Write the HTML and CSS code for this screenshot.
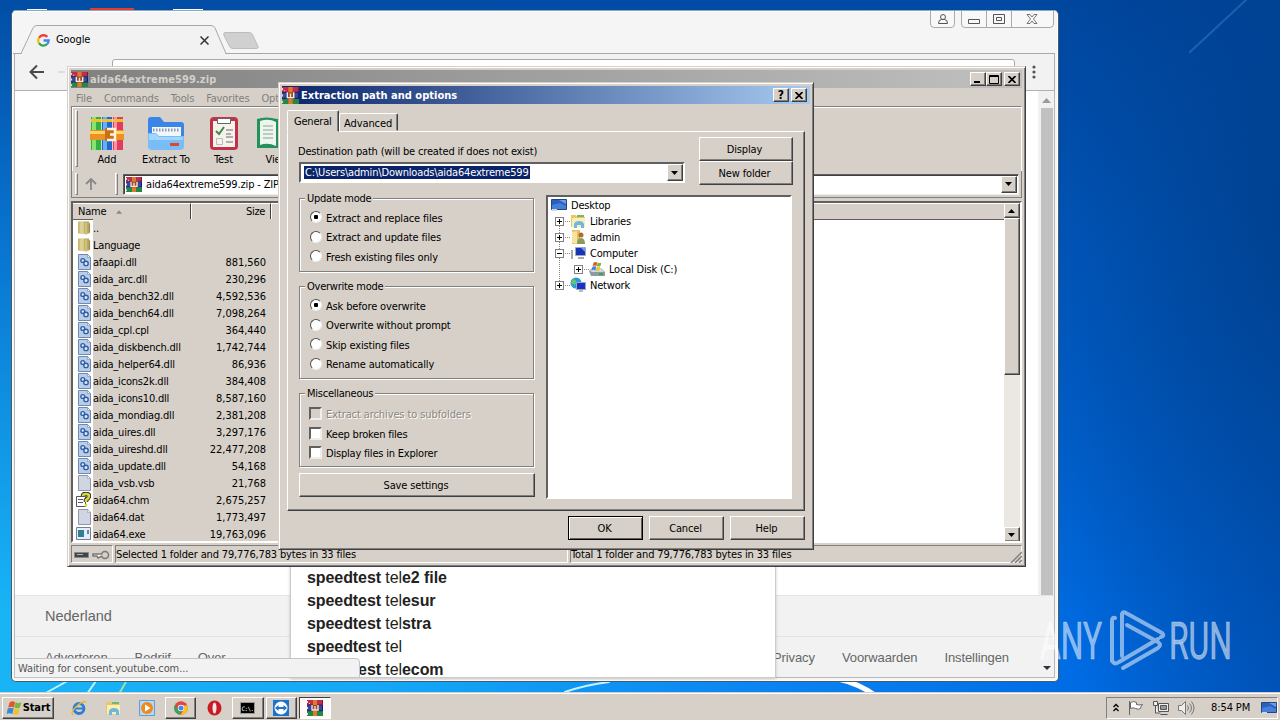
FILE: index.html
```html
<!DOCTYPE html>
<html lang="en">
<head>
<meta charset="utf-8">
<title>Desktop</title>
<link rel="stylesheet" href="styles.css">
</head>
<body>
<svg width="0" height="0" class="defs">
  <symbol id="rar" viewBox="0 0 16 16">
    <path fill="#c02c50" d="M0 0h16v5H0z"/><path fill="#3048b0" d="M0 5h16v6H0z"/><path fill="#1f8a48" d="M0 11h16v5H0z"/>
    <path stroke="#201030" stroke-width=".7" d="M0 5h16M0 10.700h16"/>
    <path fill="#e07a28" d="M6 0h4v16H6z"/><path fill="#9a4a2a" d="M5 5h7v6H5z"/><path fill="none" stroke="#f6e8dc" stroke-width="1.300" d="M5 5v5h6V5M8 6v4"/>
    <path fill="#f3d8c8" d="M0 1h1v2H0zM0 7h1v2H0zM0 13h1v2H0zM2 3h1v1H2z"/>
    <path fill="#801838" d="M15 0h1v5h-1z"/><path fill="#182068" d="M15 5h1v6h-1z"/>
  </symbol>
  <symbol id="dll" viewBox="0 0 13 16">
    <path fill="#b7cde8" stroke="#7287ae" d="M.5.5h9l3 3v12H.5z"/><path fill="#eef5fd" stroke="#7287ae" stroke-width=".6" d="M9.500.500v3h3z"/>
    <g fill="#dce9f8" stroke="#315ea6" stroke-width="1.400"><circle cx="4.800" cy="6.500" r="1.900"/><circle cx="8" cy="9.400" r="2.200"/></g>
  </symbol>
  <symbol id="file" viewBox="0 0 13 16">
    <path fill="#d0d5e4" stroke="#8f96aa" d="M.5.5h9l3 3v12H.5z"/><path fill="#fff" stroke="#8f96aa" stroke-width=".6" d="M9.500.500v3h3z"/>
  </symbol>
  <symbol id="fold" viewBox="0 0 14 16">
    <path fill="#c9b871" d="M0 1h5v13H0z"/><path fill="#ddd092" d="M2 2l4-1v14l-4-1z"/><path fill="#b5a35e" d="M6 1h6v13H6z"/><path fill="#cfc07a" d="M7 2h3v13H7z"/><path fill="#8d7c40" d="M12 3h1v10h-1z"/>
  </symbol>
  <symbol id="book" viewBox="0 0 16 16">
    <path fill="#e9c767" d="M1 2h5l1 2h8v10H1z"/><path fill="#fbeeb2" d="M2 5h13v9H2z"/><path fill="#6fb7dd" d="M4 15V11q1-3 5-3t5 3v4h-3v-3H7v3z"/><path fill="#79b66b" d="M7 2h7v2H7z"/>
  </symbol>
  <symbol id="scr" viewBox="0 0 16 14">
    <path fill="#2a5fc0" stroke="#25457f" d="M.5 1.500h15v10H.5z"/><path fill="#6a9fe4" d="M8 2h7v4z"/><path fill="#4580d8" d="M1 7l8-2 6 3v3H1z"/><path fill="#ced9e4" d="M1 11h5v2H1z"/>
  </symbol>
  <symbol id="flag" viewBox="0 0 14 14">
    <path fill="#e65524" d="M3 2c2-1 3-1 5 0L7 7C5 6 4 6 1.500 7z"/><path fill="#75b93c" d="M8.500 2.200c2 1 3 1 5.500 0L12.500 7c-2 1-3 1-5 .2z"/><path fill="#3989d8" d="M1.200 8c2-1 3-1 5.500-.2L5.500 13c-2-1-3.500-1-5.500 0z"/><path fill="#f5c026" d="M7.300 8c2 1 3 1 5 .2L11 13c-2 1-3 1-5 .200z"/>
  </symbol>
  <symbol id="dn" viewBox="0 0 8 4"><path d="M0 0h7L3.500 4z"/></symbol>
  <symbol id="up" viewBox="0 0 8 4"><path d="M0 4h7L3.500 0z"/></symbol>
  <symbol id="x" viewBox="0 0 8 7"><path fill="none" stroke="#000" stroke-width="1.700" d="M.5 0l7 7M7.500 0l-7 7"/></symbol>
</svg>

<main class="desktop">
  <svg class="wall" viewBox="0 0 1280 720">
    <g fill="none" stroke-linecap="round">
      <path stroke="#6fb6ef" stroke-opacity=".25" stroke-width="2" d="M1190 52L1246 0"/>
      <path stroke="#c8f2ff" stroke-width="2" d="M44 694l27-15M87 694l11-16M565 692q20-7 44-10"/>
      <path stroke="#9ae0a0" stroke-width="2" d="M119 694l8-14"/>
      <path stroke="#fff" stroke-width="5" d="M838 679q20 4 40 18"/>
    </g>
    <path fill="#e63b2c" d="M90 8h44v4H90z"/><path fill="#fff" d="M173 9h30v3h-30zM27 9h20v2H27z"/>
  </svg>

  <section class="chrome">
    <header class="strip">
      <svg class="tabshape" width="260" height="29" viewBox="0 0 260 29">
        <path fill="#f2f2f2" stroke="#a8a8a8" d="M0 28.500h8L20 3q1-2.500 4-2.500h174q3 0 4 2.500l11 25.500"/><path fill="#f2f2f2" d="M9 28h203v1H9z"/>
        <path fill="#d0d0d0" stroke="#bcbcbc" d="M212 7.500h24q3 0 4 3l5 11q1 2-2 2h-23q-3 0-4-3l-5-10q-1-3 1-3z"/>
      </svg>
      <div class="tab">
        <svg width="13" height="13" viewBox="0 0 13 13" fill="none" stroke-width="2.300"><path stroke="#e94235" d="M2 3.800A5.200 5.200 0 0 1 10.300 2.900"/><path stroke="#fabb05" d="M2 9.200A5.200 5.200 0 0 1 2 3.800"/><path stroke="#34a853" d="M10 10.200A5.200 5.200 0 0 1 2 9.200"/><path stroke="#4285f4" d="M6.500 6.500h5.200Q11.600 8.800 10 10.200"/></svg>
        <span class="tabname">Google</span>
        <svg width="9" height="9" viewBox="0 0 9 9"><path stroke="#333" stroke-width="1.500" d="M.5.5l8 8M8.500.5l-8 8"/></svg>
      </div>
      <div class="wbtns">
        <svg width="124" height="18" viewBox="0 0 124 18" fill="#f8f8f8" stroke="#aaa">
          <path d="M.5 0v13q0 3.500 3.500 3.500h17q3.500 0 3.500-3.500V0M31.500 0v13q0 3.500 3.500 3.500h85q3.500 0 3.500-3.500V0M56.500 0v16M81.500 0v16"/>
          <g stroke="#555"><circle cx="13" cy="6" r="2.500"/><path d="M8.500 12.500q0-4 3-4h3q3 0 3 4zM38.500 8.500h11v4h-11zM63.500 3.500h11v9h-11zM66.500 6.500h5v3h-5z"/><path stroke-width=".8" d="M97 3.500h3l2 2.500 2-2.500h3l-3.500 4.500 3.500 4.500h-3l-2-2.500-2 2.500h-3l3.500-4.500z"/></g>
        </svg>
      </div>
    </header>
    <div class="tools">
      <svg width="36" height="16" viewBox="0 0 36 16" fill="none" stroke="#4a4a4a" stroke-width="2"><path d="M15 8H2M8 1.500L1.500 8 8 14.500"/><path stroke="#ddd" d="M29 8h7"/></svg>
      <div class="omni"></div>
      <svg width="4" height="14" fill="#555"><circle cx="2" cy="2" r="1.600"/><circle cx="2" cy="7" r="1.600"/><circle cx="2" cy="12" r="1.600"/></svg>
    </div>
    <div class="page">
      <div class="blank"><div class="sbar"><svg width="9" height="5" fill="#999"><path d="M0 5h9L4.500 0z"/></svg><i></i></div></div>
      <div class="country">Nederland</div>
      <div class="links"><span>Adverteren</span><span>Bedrijf</span><span>Over</span><span class="push">Privacy</span><span>Voorwaarden</span><span>Instellingen</span></div>
    </div>
    <div class="sugg">
      <p><b>speedtest</b> tel<b>e2 file</b></p><p><b>speedtest</b> tel<b>esur</b></p><p><b>speedtest</b> tel<b>stra</b></p><p><b>speedtest</b> tel</p><p><b>speedtest</b> tel<b>ecom</b></p>
    </div>
    <div class="wait">Waiting for consent.youtube.com...</div>
  </section>

  <svg class="mark" width="210" height="70" viewBox="0 0 210 70">
    <g fill="#fff" fill-opacity=".55" stroke="#fff" stroke-opacity=".3"><text x="4" y="51" textLength="62" lengthAdjust="spacingAndGlyphs">ANY</text><text x="133" y="51" textLength="63" lengthAdjust="spacingAndGlyphs">RUN</text></g>
    <g fill="none" stroke="#b9d4f2" stroke-opacity=".7" stroke-width="4" stroke-linejoin="round" stroke-linecap="round"><path d="M79 10q-3-1-3 3v40q3 4 7 1l39-23M91 17l31 17q4 3 0 6L87 60M86 48V6q1-3 4-1l36 20q3 3-1 4"/></g>
    <path fill="#2b3440" d="M7 58h8l-4 4z"/>
  </svg>

  <section class="rar">
    <header class="rtitle"><svg width="17" height="15" viewBox="0 0 16 16" preserveAspectRatio="none"><use href="#rar"/></svg><b>aida64extreme599.zip</b>
      <span class="cb first"><svg width="8" height="8"><path d="M0 6h6v2H0z"/></svg></span><span class="cb"><svg width="10" height="9" fill="none" stroke="#000"><path d="M.5.500h9v8h-9zM0 1.500h10"/></svg></span><span class="cb gap"><svg width="8" height="7"><use href="#x"/></svg></span>
    </header>
    <nav class="menu"><span>File</span><span>Commands</span><span>Tools</span><span>Favorites</span><span>Options</span></nav>
    <div class="rtools">
      <i class="grip"></i>
      <div class="tool w1"><svg width="34" height="34" viewBox="0 0 34 34"><path fill="#2fb344" d="M1 1h10v33H1z"/><path fill="#8ae36a" d="M2 1h4v33H2z"/><path fill="#2566cf" d="M12 1h10v33H12z"/><path fill="#68b0f5" d="M13 1h4v33h-4z"/><path fill="#e33c5a" d="M23 1h10v33H23z"/><path fill="#ff92a4" d="M24 1h3v33h-3z"/><path fill="#f0c030" d="M1 3h10v3H1zM12 3h10v3H12zM23 3h10v3H23z"/><path fill="#e79424" d="M0 14h34v10H0z"/><path fill="#ffd36a" d="M0 15h34v3H0z"/><path fill="#c87018" d="M15 12h11v13H15z"/><path fill="none" stroke="#fff3dc" stroke-width="2.500" d="M17 13h8v11h-8M20 18.500h5"/></svg>Add</div>
      <div class="tool w2"><svg width="38" height="34" viewBox="0 0 38 34"><path fill="#3a86e8" d="M1 4q0-3 3-3h9l4 5h17q3 0 3 3v22H1z"/><path fill="#f2f7fd" d="M5 11h29v10H5z"/><path stroke="#8e99aa" stroke-width="3" stroke-dasharray="1.500 1.500" d="M6 14h27"/><path fill="#78bdf8" d="M1 17h8l3 3h25v10q0 4-4 4H5q-4 0-4-4z"/><path fill="#a4d6fd" d="M2 18h7l3 3h24v3H2z"/><path fill="#e0462a" d="M23 27h9v3h-9z"/></svg>Extract To</div>
      <div class="tool w3"><svg width="28" height="34" viewBox="0 0 28 34"><rect y="1" width="28" height="33" rx="4" fill="#c03248"/><path fill="#f6f2ec" d="M3 5h22v26H3z"/><path fill="#fff" stroke="#666" d="M7.500 2.500h13v5h-13z"/><path fill="none" stroke="#3b8a48" stroke-width="2" d="M6 15l3 3 5-7"/><path stroke="#999" stroke-width="1.500" d="M16 14h7M16 21h7M16 26h7M16 18h5"/><path fill="none" stroke="#bbb" d="M6.500 22.500h6v6h-6z"/></svg>Test</div>
      <div class="tool w4"><svg width="40" height="34" viewBox="0 0 40 34"><path fill="#25915a" d="M0 3q9-3 20 0 11-3 20 0v29H0z"/><path fill="#eef5ed" d="M3 5q9-3 16 1v24q-8-4-16-1zM37 5q-9-3-16 1v24q8-4 16-1z"/><path stroke="#aac0b2" stroke-width="1.500" d="M6 10h10M6 14h10M6 18h10M6 22h10"/></svg>View</div>
    </div>
    <div class="addr"><i class="grip"></i><svg width="12" height="12" fill="none" stroke="#888" stroke-width="1.800"><path d="M6 12V1M1 6l5-5 5 5"/></svg><i class="grip g2"></i>
      <div class="field"><svg width="16" height="15" viewBox="0 0 16 16" preserveAspectRatio="none"><use href="#rar"/></svg><span>aida64extreme599.zip - ZIP archive</span><em class="arrow"><svg width="8" height="4"><use href="#dn"/></svg></em></div>
    </div>
    <div class="list">
      <div class="lhead"><span class="c1">Name<svg width="7" height="4" fill="#888"><use href="#up"/></svg></span><span class="c2">Size</span><span class="c3"></span></div>
      <div class="rows" id="rows"></div>
      <div class="vscroll"><em class="arrow"><svg width="8" height="4"><use href="#up"/></svg></em><i></i><em class="arrow end"><svg width="8" height="4"><use href="#dn"/></svg></em></div>
    </div>
    <footer class="status"><span class="s0"><svg width="37" height="10"><path fill="#444" stroke="#888" d="M.5 2.500h14v5H.5z"/><path stroke="#9bc" d="M3 4.500h6"/><g fill="none" stroke="#777" stroke-width="1.500"><circle cx="31" cy="5" r="3.500"/><path fill="#fff" d="M28 4h-9v2h4l1 2 4-2"/></g></svg></span><span class="s1">Selected 1 folder and 79,776,783 bytes in 33 files</span><span class="s2">Total 1 folder and 79,776,783 bytes in 33 files</span><svg class="size" width="12" height="12" stroke="#808080" stroke-width="1.500"><path d="M1 12L12 1M5 12l7-7M9 12l3-3"/></svg></footer>
  </section>

  <section class="dlg">
    <header class="dtitle"><svg width="17" height="17"><use href="#rar"/></svg><b>Extraction path and options</b><span class="cb first q">?</span><span class="cb gap"><svg width="8" height="7"><use href="#x"/></svg></span></header>
    <div class="tabs"><span class="on">General</span><span>Advanced</span></div>
    <div class="panel">
      <div class="dest">
        <div class="dl"><label>Destination path (will be created if does not exist)</label><div class="combo"><mark>C:\Users\admin\Downloads\aida64extreme599</mark><em class="arrow"><svg width="8" height="4"><use href="#dn"/></svg></em></div></div>
        <div class="db"><button>Display</button><button>New folder</button></div>
      </div>
      <div class="cols">
        <div class="left">
          <div class="grp g-a"><h4>Update mode</h4><p><i class="r on"></i>Extract and replace files</p><p><i class="r"></i>Extract and update files</p><p><i class="r"></i>Fresh existing files only</p></div>
          <div class="grp g-b"><h4>Overwrite mode</h4><p><i class="r on"></i>Ask before overwrite</p><p><i class="r"></i>Overwrite without prompt</p><p><i class="r"></i>Skip existing files</p><p><i class="r"></i>Rename automatically</p></div>
          <div class="grp g-c"><h4>Miscellaneous</h4><p class="off"><i class="k"></i>Extract archives to subfolders</p><p><i class="k"></i>Keep broken files</p><p><i class="k"></i>Display files in Explorer</p></div>
          <button class="save">Save settings</button>
        </div>
        <div class="tree">
          <p><svg width="16" height="14"><use href="#scr"/></svg>Desktop</p>
          <p class="n"><i class="plus"></i><svg width="16" height="16"><use href="#book"/></svg>Libraries</p>
          <p class="n"><i class="plus"></i><svg width="16" height="16"><path fill="#e5c061" d="M2 1h8v14H2z"/><path fill="#f6e3a0" d="M2 3l5-1v13l-5-1z"/><circle cx="11" cy="6" r="2.500" fill="#b06a3a"/><path fill="#8a9a5c" d="M7 15q0-6 4-6t4 6z"/></svg>admin</p>
          <p class="n long"><i></i><svg width="16" height="16"><path fill="#1832b8" stroke="#9ab" d="M5.500 2.500h10v8h-10z"/><path fill="#6c9af0" d="M11 3h4v4z"/><path fill="#aaa" d="M1 5h2v9H1zM8 12h6v2H8z"/></svg>Computer</p>
          <p class="n deep"><i class="plus"></i><svg width="16" height="16"><path fill="#8d9aa4" d="M0 10l3-3h9l4 4v4H2z"/><path fill="#cfd6dc" d="M1 10l3-3h8l3 4H3z"/><path fill="#3aa84a" d="M10 12h4v2h-4z"/><svg x="2" y="0" width="11" height="10" viewBox="0 0 14 14"><use href="#flag"/></svg></svg>Local Disk (C:)</p>
          <p class="n"><i class="plus"></i><svg width="16" height="16"><circle cx="6" cy="6" r="5.500" fill="#2c9bd2"/><path fill="#65c66a" d="M3 2q4 1 3 4t-5 0z"/><path fill="#1832c8" stroke="#9ab" d="M6.500 5.500h9v7h-9z"/><path fill="#bbb" d="M9 13h4v2H9z"/></svg>Network</p>
        </div>
      </div>
    </div>
    <div class="acts"><button class="def">OK</button><button>Cancel</button><button>Help</button></div>
  </section>

  <footer class="task">
    <button class="start"><svg width="16" height="15" viewBox="0 0 14 14"><use href="#flag"/></svg>Start</button>
    <span class="ti"><svg width="17" height="16"><ellipse cx="8" cy="8.500" rx="5" ry="5" fill="none" stroke="#2b7fd4" stroke-width="2.800"/><path stroke="#2b7fd4" stroke-width="2" d="M4 8.500h9"/><path fill="none" stroke="#e8b832" stroke-width="1.400" d="M2 15Q-1 12 6 6t9-4"/></svg></span>
    <span class="ti"><svg width="16" height="16"><use href="#book"/></svg></span>
    <span class="ti"><svg width="16" height="16"><path fill="#b7d9f5" stroke="#5b9ed8" d="M.5.5h15v15H.5z"/><circle cx="8" cy="8" r="6" fill="#ee8a1c"/><path fill="#fff" d="M6 4.500v7L11.500 8z"/></svg></span>
    <span class="ti btn"><svg width="14" height="14" viewBox="0 0 14 14"><circle cx="7" cy="7" r="6.800" fill="#e2453a"/><path fill="#35a653" d="M1 3.700L4.500 9.500 7 10 6 13.800A6.800 6.800 0 0 1 1 3.700z"/><path fill="#fbc21c" d="M13.300 4.500H8L10 8.500 6.500 13.800A6.800 6.800 0 0 0 13.300 4.500z"/><circle cx="7" cy="7" r="3.200" fill="#fff"/><circle cx="7" cy="7" r="2.500" fill="#4285f4"/></svg></span>
    <span class="ti"><svg width="15" height="16"><ellipse cx="7.500" cy="8" rx="7" ry="7.500" fill="#cc1a22"/><ellipse cx="7.500" cy="8" rx="2" ry="5.500" fill="#f3e8e8"/></svg></span>
    <span class="ti btn"><svg width="15" height="12"><path stroke="#999" d="M.5.500h14v11H.5z"/><text x="1.500" y="9" fill="#fff" font-size="6" letter-spacing="-.6" font-family="DejaVu Sans Mono">C:\.</text></svg></span>
    <span class="ti btn"><svg width="16" height="16"><path fill="#1b73d0" d="M0 0h16v16H0z"/><circle cx="8" cy="8" r="6.500" fill="#fff"/><path fill="#1b73d0" d="M2 8l3.500-3v2h5V5L14 8l-3.500 3V9h-5v2z"/></svg></span>
    <span class="ti btn act"><svg width="16" height="16"><use href="#rar"/></svg></span>
    <div class="tray">
      <svg width="6" height="9" fill="none" stroke="#000" stroke-width="1.300"><path d="M.5 4L3 1.500 5.500 4M.5 8L3 5.500 5.500 8"/></svg>
      <svg width="16" height="16" fill="#fff" stroke="#666"><path d="M1.500 1v14M2.500 2.500q3-2 6 0v2q3 1 6 0-2 2-2 4-2 1.500-5 0-2-1.500-5 0z"/></svg>
      <svg width="16" height="16" fill="#eee" stroke="#555"><path d="M5.500 3.500h10v8h-10zM7.500 14.500h7M2.500 6v7h5"/><path fill="#999" d="M7.500 5.500h6v4h-6z"/><path d="M.5 1.500h4v4h-4z"/></svg>
      <svg width="17" height="16" fill="#eee" stroke="#777"><path d="M.5 5.500h3l4-4v13l-4-4h-3z"/><path fill="none" d="M9.500 5.500q2 2.500 0 5M11.500 3.500q4 4.500 0 9M13.500 1.500q5 6.500 0 13"/></svg>
      <span>8:54 PM</span>
      <svg width="16" height="14"><use href="#scr"/></svg>
    </div>
  </footer>
</main>
<script src="files.js"></script>
</body>
</html>
```

FILE: styles.css
```css
* { box-sizing: border-box; }
body { margin: 0; font: 11px/13px "DejaVu Sans Condensed", "DejaVu Sans", sans-serif; font-stretch: condensed; letter-spacing: -.35px; color: #000; }
p, h4 { margin: 0; font-weight: normal; }
svg { display: block; flex: none; }
i, em { font-style: normal; flex: none; }
.defs { position: absolute; }
.desktop { position: relative; width: 1280px; height: 720px; overflow: hidden;
  background:
    radial-gradient(ellipse 380px 560px at 102% 32%, #003c84cc 0, #003c8400 100%),
    linear-gradient(180deg, #0046a0ee 0, #0056bea8 35%, #0070e000 85%),
    linear-gradient(90deg, #18b4f6 0, #14a8f6 30%, #0a84f2 60%, #006ce4 84%, #0056c0 100%); }
.wall { position: absolute; inset: 0; width: 1280px; height: 720px; }

.chrome { position: absolute; left: 11px; top: 10px; width: 1048px; height: 672px; display: flex; flex-direction: column; background: #f5f5f5; border: 1px solid #4c5a66; border-top-color: #8ab; border-radius: 5px; padding: 0 3px 3px 2px; overflow: hidden; box-shadow: inset 0 0 0 1px #fff; }
.strip { height: 43px; flex: none; position: relative; display: flex; border-bottom: 1px solid #a8a8a8; }
.tabshape { position: absolute; left: -1px; top: 14px; }
.tab { position: relative; display: flex; align-items: center; height: 24px; margin: 17px 0 0 23px; width: 172px; }
.tabname { margin: -2px 0 0 6px; font-size: 11px; letter-spacing: -.1px; flex: 1; }
.wbtns { margin-left: auto; margin-right: 1px; }
.tools { height: 37px; flex: none; display: flex; align-items: center; padding: 0 18px 0 14px; background: #f2f2f2; border: 1px solid #b0b0b0; border-top: 0; }
.omni { height: 27px; flex: 1; margin: 0 17px 0 47px; border: 1px solid #a9a9a9; border-radius: 3px; background: #fff; }
.page { flex: 1; display: flex; flex-direction: column; background: #fff; border: solid #b8b8b8; border-width: 0 1px 1px; font: 13px "Liberation Sans", Arial, sans-serif; letter-spacing: 0; color: #666; }
.blank { height: 504px; display: flex; justify-content: flex-end; }
.sbar { width: 16px; background: #f1f1f1; display: flex; flex-direction: column; align-items: center; padding-top: 7px; gap: 5px; }
.sbar i { flex: 1; width: 12px; background: #c1c1c1; margin-left: 1px; }
.country { height: 42px; background: #f2f2f2; border-top: 1px solid #e4e4e4; border-bottom: 1px solid #e4e4e4; padding: 12px 30px 0; font-size: 14.500px; line-height: 17px; }
.links { flex: 1; background: #f2f2f2; display: flex; padding: 13px 45px 0 30px; gap: 27px; line-height: 15px; letter-spacing: -.1px; }
.links .push { margin-left: auto; }
.sugg { position: absolute; left: 278px; top: 480px; width: 486px; bottom: 3px; background: #fff; border: 1px solid #ccc; border-top: 0; box-shadow: 0 1px 3px #0003; padding: 75px 16px 0; font: 16px/23px "Liberation Sans", Arial, sans-serif; letter-spacing: 0; color: #222; overflow: hidden; white-space: nowrap; }
.sugg p { height: 23px; letter-spacing: -.08px; }
.wait { position: absolute; left: 2px; bottom: 3px; width: 346px; height: 20px; background: #f2f2f2; border: 1px solid #c4c4c4; border-radius: 0 4px 0 0; padding: 3px 3px; color: #555; letter-spacing: -.1px; }
.mark { position: absolute; left: 1036px; top: 608px; font: 400 51px Roboto, sans-serif; letter-spacing: 0; }

.rar { position: absolute; left: 67px; top: 66px; width: 959px; height: 501px; background: #d6d0c8; border: 1px solid; border-color: #d6d0c8 #404040 #404040 #d6d0c8; box-shadow: inset 1px 1px #fff, inset -1px -1px #808080; padding: 3px; display: flex; flex-direction: column; }
.rtitle, .dtitle { height: 18px; flex: none; display: flex; align-items: center; background: linear-gradient(90deg, #808080, #c0c0c0); color: #d4d0c8; padding: 0 2px 0 0; letter-spacing: .08px; }
.rtitle b, .dtitle b { font-size: 11px; margin-left: 2px; }
.dtitle b { letter-spacing: .02px; }
.cb, .arrow, button { background: #d6d0c8; border: 1px solid; border-color: #fff #404040 #404040 #fff; box-shadow: inset -1px -1px #808080; display: flex; align-items: center; justify-content: center; }
.cb { width: 16px; height: 14px; }
.cb.first { margin-left: auto; }
.cb.gap { margin-left: 2px; }
.q { font-weight: bold; color: #000; font-size: 12px; }
.menu { height: 18px; flex: none; display: flex; align-items: center; gap: 12px; padding: 2px 5px 0; color: #808080; letter-spacing: -.15px; }
.rtools { height: 65px; flex: none; border: 1px solid #808080; border-right-color: #fff; box-shadow: inset 1px 1px #fff; border-bottom: 0; display: flex; padding: 3px 3px; }
.grip { width: 3px; border: 1px solid; border-color: #fff #808080 #808080 #fff; height: 57px; }
.tool { display: flex; flex-direction: column; align-items: center; gap: 3px; padding-top: 6px; letter-spacing: -.1px; }
.w1 { width: 58px; } .w2 { width: 60px; } .w3 { width: 55px; } .w4 { width: 52px; }
.addr { height: 27px; flex: none; border: solid #808080; border-width: 0 1px 1px; display: flex; align-items: center; padding: 0 2px 0 3px; }
.addr .grip { height: 22px; }
.addr > svg { margin: 0 18px 0 7px; }
.field { margin-left: 5px; flex: 1; height: 21px; background: #fff; border: 1px solid; border-color: #606060 #eee #eee #606060; display: flex; align-items: center; padding: 1px 1px 1px 2px; overflow: hidden; white-space: nowrap; box-shadow: inset 1px 1px #404040; }
.field span { margin: 1px 0 0 4px; letter-spacing: -.15px; flex: 1; }
.arrow { width: 16px; height: 17px; }
.list { margin-top: 3px; height: 342px; flex: none; border: 2px solid; border-color: #606060 #fff #fff #606060; display: grid; grid-template: 17px 1fr / 1fr 16px; background: #fff; overflow: hidden; }
.lhead { display: flex; background: #d6d0c8; margin-left: -1px; }
.lhead span { border: 1px solid; border-color: #fff #404040 #606060 #fff; display: flex; align-items: center; padding: 0 5px; }
.c1 { width: 119px; gap: 10px; letter-spacing: -.2px; } .c2 { width: 80px; justify-content: flex-end; } .lhead .c3 { flex: 1; border-right: 0; }
.vscroll { grid-row: 1 / 3; grid-column: 2; display: flex; flex-direction: column; background: #ebe8e4; }
.vscroll i { height: 157px; background: #d6d0c8; border: 1px solid; border-color: #fff #404040 #404040 #fff; box-shadow: inset -1px -1px #808080; }
.vscroll .arrow { height: 15px; } .vscroll .end { margin-top: auto; }
.rows { padding-left: 4px; margin-top: -1px; }
.row { height: 17px; display: flex; align-items: center; }
.row svg { margin-right: 2px; margin-left: 1px; }
.row div { background: #d6d0c8; width: 650px; height: 17px; padding: 3px 1px 0 0; display: flex; letter-spacing: -.2px; }
.row span { width: 104px; } .row em { width: 69px; text-align: right; letter-spacing: -.05px; white-space: nowrap; }
.status { display: flex; margin-top: 2px; height: 18px; flex: none; gap: 2px; align-items: flex-end; overflow: hidden; }
.status span { height: 18px; border: 1px solid; border-color: #808080 #fff #fff #808080; padding: 2px 0; letter-spacing: -.15px; white-space: nowrap; }
.status .s0 { width: 42px; } .s1 { width: 453px; } .s2 { flex: 1; margin-right: -14px; }
.s0 svg { margin: 2px 2px; }

.dlg { position: absolute; left: 278px; top: 82px; width: 536px; height: 468px; background: #d6d0c8; border: 1px solid; border-color: #d6d0c8 #404040 #404040 #d6d0c8; box-shadow: inset 1px 1px #fff, inset -1px -1px #808080; padding: 3px 4px; display: flex; flex-direction: column; }
.dtitle { background: linear-gradient(90deg, #0a246a, #a6caf0); color: #fff; margin: 0 -1px; padding-right: 3px; }
.tabs { display: flex; align-items: flex-end; height: 27px; padding-left: 4px; flex: none; letter-spacing: -.1px; }
.tabs span { height: 18px; border: 1px solid; border-color: #fff #404040 transparent #fff; border-radius: 2px 2px 0 0; padding: 3px 4px 0 4px; width: 59px; box-shadow: inset -1px 0 #808080; }
.tabs .on { position: relative; height: 22px; width: 52px; margin-bottom: -1px; padding: 4px 6px; background: #d6d0c8; letter-spacing: -.2px; }
.panel { margin: 0 4px; height: 380px; flex: none; border: 1px solid; border-color: #fff #404040 #404040 #fff; box-shadow: inset -1px -1px #808080; padding: 5px 11px 0 11px; }
.dest { display: flex; justify-content: space-between; height: 58px; }
.dl { width: 386px; padding-top: 8px; } .dl label { display: block; height: 17px; letter-spacing: -.17px; margin-left: -1px; }
.combo { height: 21px; background: #fff; border: 2px solid; border-color: #606060 #fff #fff #606060; display: flex; align-items: center; padding-left: 3px; }
.combo mark { background: #0a246a; color: #fff; letter-spacing: -.17px; padding: 0 1px; white-space: nowrap; } .combo .arrow { margin-left: auto; }
button { font: inherit; letter-spacing: -.15px; color: #000; padding: 0; }
.db { display: flex; flex-direction: column; } .db button { width: 94px; height: 24px; padding-right: 3px; }
.cols { display: flex; gap: 12px; }
.left { width: 236px; padding-top: 3px; margin-right: -1px; }
.grp { border: 1px solid #808080; box-shadow: inset 1px 1px #fff, 1px 1px #fff; position: relative; padding: 9.500px 10px 0; width: 235px; letter-spacing: -.15px; }
.grp h4 { position: absolute; top: -7px; left: 5px; padding: 0 2px; background: #d6d0c8; letter-spacing: -.25px; }
.grp p { height: 19.5px; display: flex; align-items: center; }
.g-a { height: 74px; } .g-b { height: 93px; margin-top: 14px; } .g-c { height: 74px; margin-top: 14px; padding-top: 11px; letter-spacing: -.2px; }
.r { width: 12px; height: 12px; border-radius: 50%; background: #fff; border: 1px solid; border-color: #505050 #eee #eee #505050; margin: -2px 4px 0 0; }
.r.on { background: radial-gradient(circle, #000 2px, #fff 2.500px); }
.k { width: 13px; height: 13px; background: #fff; border: 2px solid; border-color: #606060 #eee #eee #606060; margin: -2px 4px 0 -1px; }
.off { color: #8c8781; text-shadow: 1px 1px #fff; letter-spacing: -.1px; } .off .k { background: #d6d0c8; }
.save { width: 236px; height: 24px; margin-top: 6px; padding-right: 2px; }
.tree { width: 246px; height: 304px; background: #fff; border: 2px solid; border-color: #606060 #fff #fff #606060; padding: 0 3px; letter-spacing: -.2px; }
.tree p { height: 16px; display: flex; align-items: center; gap: 4px; }
.tree .n { padding-left: 4px; gap: 4px; } .tree .deep { padding-left: 23px; }
.tree i { width: 9px; height: 9px; border: 1px solid #808080; background: linear-gradient(#000, #000) center / 5px 1px no-repeat; margin-right: 2px; position: relative; }
.tree .plus { background: linear-gradient(#000, #000) center / 5px 1px no-repeat, linear-gradient(#000, #000) center / 1px 5px no-repeat; }
.tree i::before { content: ""; position: absolute; left: 9px; top: 3px; width: 5px; border-top: 1px dotted #888; }
.tree i::after { content: ""; position: absolute; left: 3px; top: 8px; height: 7px; border-left: 1px dotted #888; }
.tree .long i::after { height: 23px; }
.tree .n:last-child i::after, .tree .deep i::after { display: none; }
.acts { display: flex; justify-content: flex-end; gap: 6px; padding: 5px 4px 0 0; }
.acts button { width: 75px; height: 24px; padding: 0 2px 0 0; } .acts .def { border-color: #000; box-shadow: inset 1px 1px #fff, inset -1px -1px #606060; }

.task { position: absolute; left: 0; right: 0; bottom: 0; height: 28px; background: #d6d0c8; border-top: 1px solid #d6d0c8; box-shadow: inset 0 1px #fff; display: flex; align-items: center; padding: 3px 2px 1px; }
.start { width: 52px; height: 22px; gap: 1px; font-weight: bold; font-size: 11px; letter-spacing: -.1px; margin-right: 9px; }
.ti { width: 33.600px; height: 22px; display: flex; align-items: center; justify-content: center; }
.btn { width: 31.600px; margin: 0 1px; border: 1px solid; border-color: #fff #404040 #404040 #fff; box-shadow: inset -1px -1px #808080; }
.act { background: #fbfaf8; border-color: #404040 #fff #fff #404040; box-shadow: none; }
.tray { margin-left: auto; height: 22px; width: 172px; border: 1px solid; border-color: #808080 #fff #fff #808080; display: flex; align-items: center; padding: 0 1px 0 6px; gap: 9px; }
.tray span { margin: 0 2px 0 7px; flex: 1; white-space: nowrap; letter-spacing: -.1px; }
```

FILE: files.js
```js
const files = [
  ['fold', '..', ''], ['fold', 'Language', ''], ['dll', 'afaapi.dll', '881,560'], ['dll', 'aida_arc.dll', '230,296'],
  ['dll', 'aida_bench32.dll', '4,592,536'], ['dll', 'aida_bench64.dll', '7,098,264'], ['dll', 'aida_cpl.cpl', '364,440'],
  ['dll', 'aida_diskbench.dll', '1,742,744'], ['dll', 'aida_helper64.dll', '86,936'], ['dll', 'aida_icons2k.dll', '384,408'],
  ['dll', 'aida_icons10.dll', '8,587,160'], ['dll', 'aida_mondiag.dll', '2,381,208'], ['dll', 'aida_uires.dll', '3,297,176'],
  ['dll', 'aida_uireshd.dll', '22,477,208'], ['dll', 'aida_update.dll', '54,168'], ['file', 'aida_vsb.vsb', '21,768'],
  ['chm', 'aida64.chm', '2,675,257'], ['file', 'aida64.dat', '1,773,497'], ['exe', 'aida64.exe', '19,763,096']
];
const special = {
  chm: '<svg width="15" height="16" style="margin-left:-1px"><path fill="#fff" stroke="#555" d="M.5 4.500h9v10h-9z"/><path stroke="#557" d="M2 7.500h5M2 10.500h5"/><path fill="none" stroke="#333" stroke-width="4.500" d="M7 4q0-2 3-2t3 2-3 4v2"/><path fill="none" stroke="#d8d83a" stroke-width="2.500" d="M7 4q0-2 3-2t3 2-3 4v2M10 12v2.500"/></svg>',
  exe: '<svg width="15" height="13" style="margin-left:-1px"><path fill="#e4edf5" stroke="#777f88" d="M.5.500h14v12H.5z"/><path fill="#2f7f98" d="M2 3h6v7H2z"/><path fill="#6785b8" d="M11 3h2v4h-2z"/></svg>'
};
document.getElementById('rows').innerHTML = files.map(([k, n, s]) =>
  `<div class="row">${special[k] || `<svg width="13" height="16"><use href="#${k}"/></svg>`}<div><span>${n}</span><em>${s}</em></div></div>`).join('');
```
